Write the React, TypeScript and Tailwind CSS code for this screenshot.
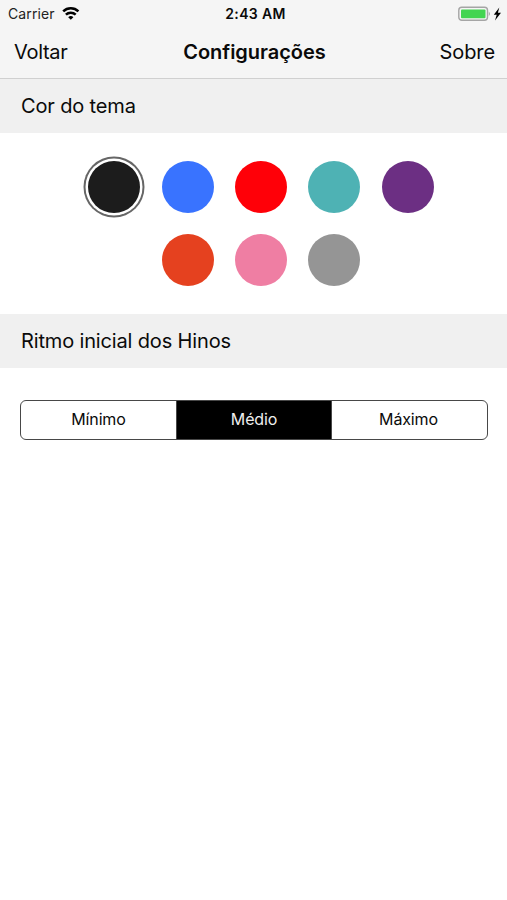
const Swatch = ({ color }: { color: string }) => (
  <div className={`h-[52px] w-[52px] rounded-full ${color}`} />
);

export default function App() {
  return (
    <div className="flex h-[900px] w-[507px] flex-col overflow-hidden bg-white font-['Inter',sans-serif] text-[#0a0a0a]">
      <header className="h-[79px] shrink-0 border-b border-[#d0d0d0] bg-[#f5f5f5]">
        <div className="grid h-[27px] grid-cols-3 items-center pr-1 pl-2 text-[14px] leading-none">
          <div className="flex items-center gap-[7px]">
            <span className="w-[47px] tracking-[0.1px] whitespace-nowrap text-[#222]">Carrier</span>
            <svg width="18" height="13" viewBox="0 0 18 13">
              <path d="M8.8 12.8 6.2 10.2a3.7 3.7 0 0 1 5.2 0z" />
              <path d="M1.2 4.4a10.900 10.900 0 0 1 15.200 0M3.900 7.700a7 7 0 0 1 9.800 0" fill="none" stroke="#000" strokeWidth="2.500" />
            </svg>
          </div>
          <span className="text-center font-semibold tracking-[0.35px] whitespace-nowrap">2:43 AM</span>
          <div className="flex items-center justify-end">
            <svg width="45" height="16" viewBox="0 0 45 16">
              <rect x=".8" y="1.300" width="28.700" height="13" rx="3" fill="none" stroke="#a5a5a5" strokeWidth="1.400" />
              <rect x="3" y="3.500" width="24.500" height="8.800" rx="1" fill="#43d551" />
              <path d="M30.800 5.500v4.600q2.300-2.300 0-4.600" fill="#a5a5a5" />
              <path d="m41.300 1.500-5.500 7.200h2.900L37 14.500l6-7.700h-3.100z" />
            </svg>
          </div>
        </div>
        <nav className="grid h-[50px] grid-cols-3 items-center pr-3 pl-[14px] text-[20px]">
          <span className="tracking-[-0.3px]">Voltar</span>
          <h1 className="text-center font-semibold tracking-[-0.03px]">Configurações</h1>
          <span className="text-right tracking-[-0.1px]">Sobre</span>
        </nav>
      </header>
      <h2 className="flex h-[54px] shrink-0 items-center bg-[#f0f0f0] pl-[21px] text-[20px] tracking-[-0.15px]">Cor do tema</h2>
      <section className="flex h-[181px] shrink-0 flex-col items-center gap-[21px] pt-[28px] pl-[15px]">
        <div className="flex gap-[21.350px]">
          <div className="h-[52px] w-[52px] rounded-full bg-[#1c1c1c] ring-2 ring-[#666] ring-offset-[2.500px]" />
          <Swatch color="bg-[#3973ff]" />
          <Swatch color="bg-[#ff0008]" />
          <Swatch color="bg-[#4eb2b4]" />
          <Swatch color="bg-[#6c2f83]" />
        </div>
        <div className="flex gap-[21.350px]">
          <Swatch color="bg-[#e5411f]" />
          <Swatch color="bg-[#ef7ea3]" />
          <Swatch color="bg-[#959595]" />
        </div>
      </section>
      <h2 className="flex h-[54px] shrink-0 items-center bg-[#f0f0f0] pl-[21px] text-[20px] tracking-[-0.15px]">Ritmo inicial dos Hinos</h2>
      <div className="mt-8 ml-5 grid h-10 w-[468px] grid-cols-[156px_154px_1fr] overflow-hidden rounded-[6px] border border-[#484848] text-[16px] tracking-[-0.15px]">
        <button className="border-r border-[#484848] pb-0.5">Mínimo</button>
        <button className="bg-black pb-0.5 text-[#eee]">Médio</button>
        <button className="border-l border-[#484848] pr-0.5 pb-0.5">Máximo</button>
      </div>
    </div>
  );
}
